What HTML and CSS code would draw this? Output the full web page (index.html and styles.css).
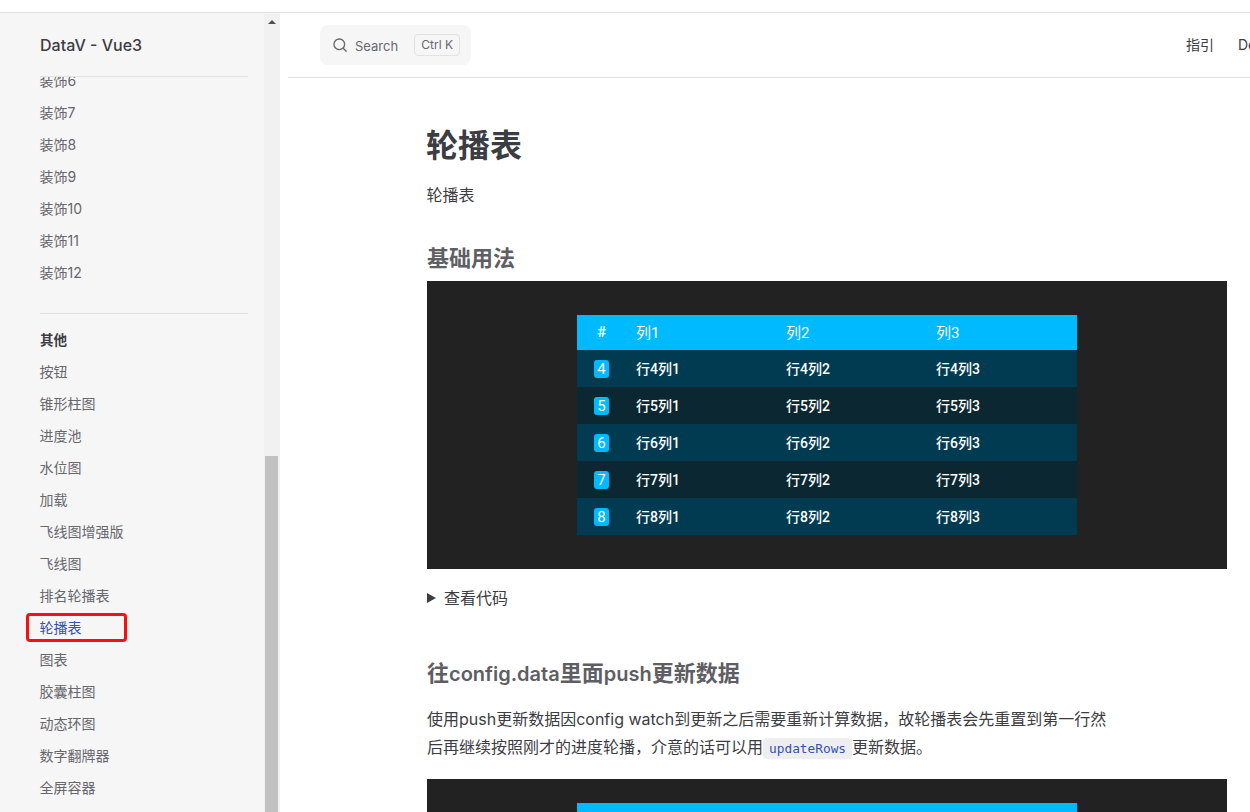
FILE: index.html
```html
<!DOCTYPE html>
<html lang="zh-CN">
<head>
    <meta charset="UTF-8">
    <meta name="viewport" content="width=device-width, initial-scale=1.0">
    <title>轮播表 | DataV - Vue3</title>
    <link rel="stylesheet" href="styles.css">
</head>
<body>
    <div class="top-strip"></div>
    <div class="layout">
        <aside class="sidebar">
            <div class="brand"><span class="brand-name">DataV - Vue3</span></div>
            <nav class="side-nav">
                <div class="side-group side-group-first">
                    <a class="side-link">装饰6</a>
                    <a class="side-link">装饰7</a>
                    <a class="side-link">装饰8</a>
                    <a class="side-link">装饰9</a>
                    <a class="side-link">装饰10</a>
                    <a class="side-link">装饰11</a>
                    <a class="side-link">装饰12</a>
                </div>
                <div class="side-group">
                    <div class="side-title">其他</div>
                    <a class="side-link">按钮</a>
                    <a class="side-link">锥形柱图</a>
                    <a class="side-link">进度池</a>
                    <a class="side-link">水位图</a>
                    <a class="side-link">加载</a>
                    <a class="side-link">飞线图增强版</a>
                    <a class="side-link">飞线图</a>
                    <a class="side-link">排名轮播表</a>
                    <a class="side-link active">轮播表</a>
                    <a class="side-link">图表</a>
                    <a class="side-link">胶囊柱图</a>
                    <a class="side-link">动态环图</a>
                    <a class="side-link">数字翻牌器</a>
                    <a class="side-link">全屏容器</a>
                </div>
            </nav>
        </aside>
        <div class="scrollbar">
            <span class="scroll-arrow"></span>
            <div class="scroll-thumb"></div>
        </div>
        <main class="main">
            <header class="header">
                <div class="search">
                    <svg class="search-icon" width="14" height="14" viewBox="0 0 20 20" fill="none" stroke="currentColor" stroke-width="1.9" stroke-linecap="round">
                        <circle cx="9" cy="9" r="7.6"></circle>
                        <path d="M14.6 14.6 L18.8 18.8"></path>
                    </svg>
                    <span class="search-text">Search</span>
                    <span class="search-key">Ctrl K</span>
                </div>
                <div class="top-nav">
                    <a>指引</a>
                    <a>Demo</a>
                </div>
            </header>
            <article class="content">
                <h1>轮播表</h1>
                <p class="lead">轮播表</p>
                <h2>基础用法</h2>
                <div class="demo">
                    <div class="board">
                        <div class="board-row board-head">
                            <div class="cell-index">#</div>
                            <div class="cell">列1</div>
                            <div class="cell">列2</div>
                            <div class="cell">列3</div>
                        </div>
                        <div class="board-row row-odd">
                            <div class="cell-index"><span class="badge">4</span></div>
                            <div class="cell">行4列1</div>
                            <div class="cell">行4列2</div>
                            <div class="cell">行4列3</div>
                        </div>
                        <div class="board-row row-even">
                            <div class="cell-index"><span class="badge">5</span></div>
                            <div class="cell">行5列1</div>
                            <div class="cell">行5列2</div>
                            <div class="cell">行5列3</div>
                        </div>
                        <div class="board-row row-odd">
                            <div class="cell-index"><span class="badge">6</span></div>
                            <div class="cell">行6列1</div>
                            <div class="cell">行6列2</div>
                            <div class="cell">行6列3</div>
                        </div>
                        <div class="board-row row-even">
                            <div class="cell-index"><span class="badge">7</span></div>
                            <div class="cell">行7列1</div>
                            <div class="cell">行7列2</div>
                            <div class="cell">行7列3</div>
                        </div>
                        <div class="board-row row-odd">
                            <div class="cell-index"><span class="badge">8</span></div>
                            <div class="cell">行8列1</div>
                            <div class="cell">行8列2</div>
                            <div class="cell">行8列3</div>
                        </div>
                    </div>
                </div>
                <div class="code-toggle"><span class="toggle-arrow"></span>查看代码</div>
                <h2 class="second-title">往<span class="latin">config.data</span>里面<span class="latin">push</span>更新数据</h2>
                <p class="text">使用push更新数据因config watch到更新之后需要重新计算数据，故轮播表会先重置到第一行然后再继续按照刚才的进度轮播，介意的话可以用<code>updateRows</code>更新数据。</p>
                <div class="demo demo-second">
                    <div class="board">
                        <div class="board-row board-head"></div>
                    </div>
                </div>
            </article>
        </main>
    </div>
</body>
</html>
```

FILE: styles.css
```css
body {
    font-family: Inter, "Noto Sans CJK SC", sans-serif;
    margin: 0;
    height: 812px;
    overflow: hidden;
    background-color: #fff;
    color: #3c3c43;
}

.top-strip {
    height: 12px;
    border-bottom: 1px solid #e2e2e3;
}

.layout {
    display: flex;
    height: 799px;
}

/* sidebar */
.sidebar {
    width: 264px;
    flex: none;
    background-color: #f6f6f7;
    overflow: hidden;
}

.brand {
    height: 63px;
    margin: 0 16px 0 40px;
    border-bottom: 1px solid #e2e2e3;
    display: flex;
    align-items: center;
    position: relative;
    background-color: #f6f6f7;
    z-index: 1;
}

.brand-name {
    font-size: 16px;
    font-weight: 500;
    color: #3c3c43;
}

.side-nav {
    padding-left: 40px;
    margin-top: -12px;
}

.side-group {
    margin-right: 16px;
    border-top: 1px solid #e2e2e3;
    padding-top: 10px;
    margin-top: 24px;
}

.side-group-first {
    border-top: none;
    padding-top: 0;
    margin-top: 0;
}

.side-title {
    font-size: 13.5px;
    font-weight: 700;
    line-height: 32px;
    color: #3c3c43;
}

.side-link {
    display: block;
    position: relative;
    font-size: 14px;
    line-height: 32px;
    color: #67676c;
    margin-left: -0.5px;
}

.side-link.active {
    color: #3451b2;
}

.side-link.active::after {
    content: "";
    position: absolute;
    left: -14px;
    top: 1px;
    width: 95px;
    height: 23px;
    border: 3px solid #f90f0f;
    border-radius: 4px;
}

.scrollbar {
    width: 16px;
    flex: none;
    background-color: #f1f1f1;
    position: relative;
}

.scroll-arrow {
    position: absolute;
    left: 4px;
    top: 7px;
    border-left: 4px solid transparent;
    border-right: 4px solid transparent;
    border-bottom: 4px solid #505050;
}

.scroll-thumb {
    position: absolute;
    left: 1px;
    right: 2px;
    top: 443px;
    bottom: 0;
    background-color: #c1c1c1;
}

/* main column */
.main {
    flex: 1;
    min-width: 0;
    margin-left: 8px;
    overflow: hidden;
}

.header {
    height: 64px;
    border-bottom: 1px solid #e2e2e3;
    display: flex;
    align-items: center;
    padding-left: 32px;
}

.search {
    width: 151px;
    height: 40px;
    flex: none;
    box-sizing: border-box;
    padding: 0 11px 0 13px;
    display: flex;
    align-items: center;
    background-color: #f6f6f7;
    border-radius: 8px;
    color: #67676c;
}

.search-icon {
    flex: none;
}

.search-text {
    font-size: 13px;
    margin-left: 8px;
    padding-top: 2px;
    flex: 1;
}

.search-key {
    font-size: 12px;
    line-height: 20px;
    padding: 0 6px;
    border: 1px solid #e2e2e3;
    border-radius: 4px;
    white-space: nowrap;
}

.top-nav {
    margin-left: 715px;
    flex: none;
    display: flex;
    gap: 24px;
    font-size: 14px;
    line-height: 20px;
    color: #3c3c43;
}

/* article */
.content {
    width: 800px;
    margin-left: 139px;
    padding-top: 48px;
}

h1 {
    font-size: 32px;
    line-height: 40px;
    font-weight: 600;
    margin: 0 0 0 -1px;
    color: #3c3c43;
}

.lead {
    font-size: 16px;
    line-height: 28px;
    margin: 15px 0 0 -0.5px;
}

h2 {
    font-size: 22px;
    line-height: 28px;
    font-weight: 600;
    color: #5e5e64;
    margin: 35px 0 0;
}

.latin {
    font-size: 20px;
}

.demo {
    background-color: #222;
    padding: 34px 0;
    margin-top: 9px;
    height: 220px;
}

.demo-second {
    margin-top: 16px;
    padding: 24px 0 0;
}

.board {
    width: 500px;
    margin: 0 auto;
    color: #fff;
    font-size: 14px;
    font-family: Roboto, "Noto Sans CJK SC", sans-serif;
}

.board-row {
    display: flex;
    height: 37px;
    align-items: center;
}

.board-head {
    height: 35px;
    background-color: #00baff;
    font-size: 15px;
}

.row-odd {
    background-color: #003b51;
}

.row-even {
    background-color: #0a2732;
}

.cell-index {
    width: 50px;
    padding-right: 1px;
    box-sizing: border-box;
    text-align: center;
    font-weight: 500;
}

.board-head .cell-index {
    padding-bottom: 2px;
}

.cell {
    width: 150px;
    padding: 0 0 2px 9px;
    box-sizing: border-box;
    font-weight: 500;
}

.board-head .cell {
    font-weight: 400;
}

.badge {
    display: block;
    width: 15px;
    height: 18px;
    margin: 0 auto;
    line-height: 18px;
    font-size: 15px;
    font-weight: 400;
    background-color: #00baff;
    border-radius: 3px;
}

.code-toggle {
    margin-top: 15px;
    font-size: 16px;
    line-height: 28px;
    display: flex;
    align-items: center;
}

.toggle-arrow {
    flex: none;
    width: 0;
    height: 0;
    margin-right: 8px;
    border-top: 5px solid transparent;
    border-bottom: 5px solid transparent;
    border-left: 9px solid #3c3c43;
}

.second-title {
    margin-top: 47px;
}

.text {
    font-size: 16px;
    line-height: 28px;
    margin: 17px 0 0;
    width: 680px;
}

code {
    font-family: "DejaVu Sans Mono", "Liberation Mono", monospace;
    font-size: 12.8px;
    color: #3451b2;
    background-color: #eeeef1;
    border-radius: 4px;
    padding: 3px 6px;
}
```
